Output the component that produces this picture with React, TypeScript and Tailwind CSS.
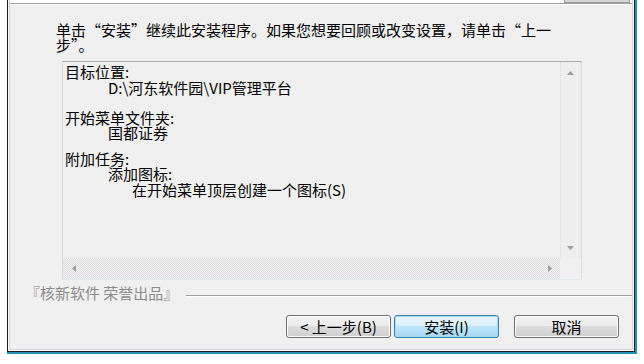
import React from "react";

function UpArrow() {
  return (
    <svg width="7" height="4" viewBox="0 0 7 4">
      <polygon points="3.5,0 7,4 0,4" fill="#9c9c9c" />
    </svg>
  );
}
function DownArrow() {
  return (
    <svg width="7" height="4" viewBox="0 0 7 4">
      <polygon points="0,0 7,0 3.5,4" fill="#9c9c9c" />
    </svg>
  );
}
function LeftArrow() {
  return (
    <svg width="4" height="7" viewBox="0 0 4 7">
      <polygon points="4,0 4,7 0,3.5" fill="#9c9c9c" />
    </svg>
  );
}
function RightArrow() {
  return (
    <svg width="4" height="7" viewBox="0 0 4 7">
      <polygon points="0,0 4,3.5 0,7" fill="#9c9c9c" />
    </svg>
  );
}

function Btn({ children, primary }: { children: React.ReactNode; primary?: boolean }) {
  return (
    <div
      className={
        "w-[105px] h-[23px] rounded-[3px] border flex items-center justify-center text-[15px] leading-[15px] text-black " +
        (primary
          ? "border-[#3c7fb1] shadow-[inset_0_0_0_1px_#9ee0f5] bg-[linear-gradient(#eaf6fd_0%,#d9f0fc_50%,#bee6fd_50%,#a7d9f5_100%)]"
          : "border-[#707070] shadow-[inset_0_0_0_1px_#fcfcfc] bg-[linear-gradient(#f2f2f2_0%,#ebebeb_50%,#dddddd_50%,#cfcfcf_100%)]")
      }
    >
      {children}
    </div>
  );
}

export default function App() {
  return (
    <div className="w-[644px] h-[364px] bg-white overflow-hidden font-['Noto_Sans_CJK_SC','Liberation_Sans',sans-serif]">
      <div className="ml-[7px] w-[630px] h-[354px] border-r-2 border-b-2 border-[#2392b6]">
        <div className="h-full border-l border-r border-b border-[#1b1b1b]">
          <div className="h-full border-l border-r border-b border-white">
            <div className="h-full border-l border-r border-b border-[#d4d4dc] bg-[#f0f0f0] flex flex-col">
              {/* top strip */}
              <div className="h-[3px] bg-white flex justify-end">
                <div className="w-[66px] h-[3px] mr-[2px] border-x border-b border-[#9a9a9a] bg-[#d4d4d4]" />
              </div>
              <div className="h-[2px] border-t border-[#a0a0a0] border-b border-b-white" />

              {/* header text */}
              <div className="pt-[17px] pl-[46px] text-[15px] leading-[15px] text-black">
                单击“安装”继续此安装程序。如果您想要回顾或改变设置，请单击“上一
                <br />
                步”。
              </div>

              {/* memo box */}
              <div className="mt-[9px] ml-[52px] w-[520px] h-[219px] border border-t-[#abadb3] border-l-[#dadbe2] border-r-[#dbdfe6] border-b-[#e3e9ef] bg-[#f0f0f0] flex flex-col">
                <div className="flex h-[196px]">
                  <div className="flex-1 pl-[2px] pt-[2px] text-[15px] leading-[15px] text-black">
                    <div className="h-[15px]">目标位置:</div>
                    <div className="h-[15px] mt-[1px] pl-[43px]">D:\河东软件园\VIP管理平台</div>
                    <div className="h-[15px] mt-[15px]">开始菜单文件夹:</div>
                    <div className="h-[15px] pl-[43px]">国都证券</div>
                    <div className="h-[15px] mt-[11px]">附加任务:</div>
                    <div className="h-[15px] pl-[43px]">添加图标:</div>
                    <div className="h-[15px] mt-[1px] pl-[67px]">在开始菜单顶层创建一个图标(S)</div>
                  </div>
                  <div className="w-[21px] flex flex-col justify-between border-x border-dotted border-[#dcdcdc] bg-[#eeeeee]">
                    <div className="h-[21px] flex items-center justify-center">
                      <UpArrow />
                    </div>
                    <div className="h-[21px] flex items-center justify-center">
                      <DownArrow />
                    </div>
                  </div>
                </div>
                <div className="flex h-[21px]">
                  <div className="flex-1 flex justify-between bg-[repeating-conic-gradient(#dddddd_0%_25%,#f3f3f3_0%_50%)] bg-[length:2px_2px]">
                    <div className="w-[21px] flex items-center justify-center">
                      <LeftArrow />
                    </div>
                    <div className="w-[21px] flex items-center justify-center">
                      <RightArrow />
                    </div>
                  </div>
                  <div className="w-[21px] bg-[#f0f0f0]" />
                </div>
              </div>

              {/* footer brand + line */}
              <div className="mt-[5px] h-[15px] flex items-center pl-[15px]">
                <span className="text-[15px] leading-[15px] text-[#8c8c8c] whitespace-nowrap">『核新软件 荣誉出品』</span>
                <div className="flex-1 ml-[8px] mt-[7px] h-[2px] border-t border-[#a0a0a0] border-b border-b-white" />
              </div>

              {/* buttons */}
              <div className="mt-[15px] flex justify-end pr-[13px]">
                <Btn>{"< 上一步(B)"}</Btn>
                <div className="w-[3px]" />
                <Btn primary>安装(I)</Btn>
                <div className="w-[15px]" />
                <Btn>取消</Btn>
              </div>
            </div>
          </div>
        </div>
      </div>
    </div>
  );
}
